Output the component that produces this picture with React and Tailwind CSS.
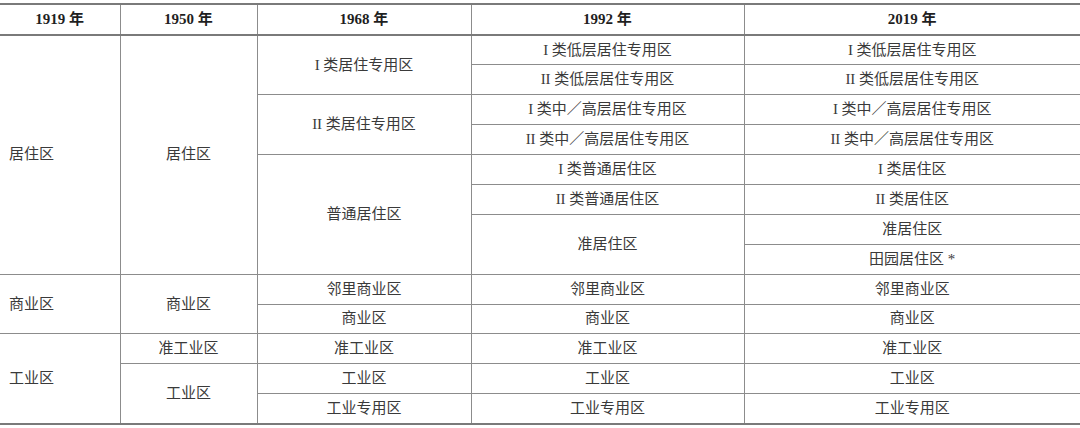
const years = ["1919 年", "1950 年", "1968 年", "1992 年", "2019 年"];

// each row: list of cells [text, rowSpan, align]
const rows = [
  [
    ["居住区", 8, "left"],
    ["居住区", 8],
    ["I 类居住专用区", 2],
    ["I 类低层居住专用区"],
    ["I 类低层居住专用区"],
  ],
  [["II 类低层居住专用区"], ["II 类低层居住专用区"]],
  [["II 类居住专用区", 2], ["I 类中／高层居住专用区"], ["I 类中／高层居住专用区"]],
  [["II 类中／高层居住专用区"], ["II 类中／高层居住专用区"]],
  [["普通居住区", 4], ["I 类普通居住区"], ["I 类居住区"]],
  [["II 类普通居住区"], ["II 类居住区"]],
  [["准居住区", 2], ["准居住区"]],
  [["田园居住区 *"]],
  [["商业区", 2, "left"], ["商业区", 2], ["邻里商业区"], ["邻里商业区"], ["邻里商业区"]],
  [["商业区"], ["商业区"], ["商业区"]],
  [["工业区", 3, "left"], ["准工业区"], ["准工业区"], ["准工业区"], ["准工业区"]],
  [["工业区", 2], ["工业区"], ["工业区"], ["工业区"]],
  [["工业专用区"], ["工业专用区"], ["工业专用区"]],
];

const colWidths = ["w-[120px]", "w-[137px]", "w-[214px]", "w-[273px]", "w-[336px]"];

export default function App() {
  return (
    <div className="w-[1080px] h-[428px] bg-white pt-[3px] overflow-hidden">
      <table
        className="w-[1080px] table-fixed border-collapse text-[15px] text-[#3a3a3a]"
        style={{ fontFamily: '"Liberation Serif", "Noto Sans CJK SC", serif' }}
      >
        <colgroup>
          {colWidths.map((w, i) => (
            <col key={i} className={w} />
          ))}
        </colgroup>
        <thead>
          <tr className="h-[31px] border-t-2 border-b-2 border-[#7a7a7a]">
            {years.map((y, i) => (
              <th
                key={y}
                className={`font-bold text-[#1f1f1f] text-center p-0 ${i > 0 ? "border-l border-[#8c8c8c]" : ""}`}
              >
                {y}
              </th>
            ))}
          </tr>
        </thead>
        <tbody className="border-b-2 border-[#7a7a7a]">
          {rows.map((cells, r) => (
            <tr key={r} className="h-[29.9px]">
              {cells.map(([text, span, align], c) => (
                <td
                  key={c}
                  rowSpan={span || 1}
                  className={`p-0 leading-none border-t border-[#8c8c8c] ${
                    align === "left" ? "text-left pl-[9px]" : "text-center border-l"
                  }`}
                >
                  {text}
                </td>
              ))}
            </tr>
          ))}
        </tbody>
      </table>
    </div>
  );
}
